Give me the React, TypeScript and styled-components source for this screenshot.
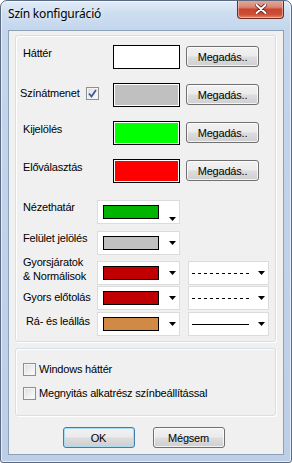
import React from "react";
import styled, { createGlobalStyle } from "styled-components";

const Global = createGlobalStyle`
  html, body { margin: 0; padding: 0; background: #ffffff; }
  body { width: 292px; height: 463px; overflow: hidden; }
  * { box-sizing: border-box; }
`;

const Window = styled.div`
  width: 292px;
  height: 463px;
  display: flex;
  flex-direction: column;
  border: 1px solid #5b6c82;
  border-radius: 7px 7px 3px 3px;
  background: linear-gradient(180deg, #e2ecf8 0px, #cddef1 12px, #c3d6ec 30px, #bccfe7 100%);
  box-shadow: inset 0 0 0 1px rgba(255, 255, 255, 0.6);
  padding: 0 7px 7px 7px;
  overflow: hidden;
`;

const TitleBar = styled.div`
  height: 29px;
  display: flex;
  align-items: flex-start;
  justify-content: space-between;
`;

const Title = styled.span`
  margin-top: 5px;
  font-family: "Noto Sans", "DejaVu Sans", sans-serif;
  font-size: 12px;
  line-height: 16px;
  letter-spacing: -0.2px;
  color: #000;
  text-shadow: 0 0 6px rgba(255, 255, 255, 0.9);
`;

const CloseButton = styled.div`
  margin-top: -1px;
  width: 47px;
  height: 19px;
  display: flex;
  align-items: center;
  justify-content: center;
  border: 1px solid #6d2b22;
  border-top: none;
  border-radius: 0 0 4px 4px;
  background: linear-gradient(180deg, #e9aa9a 0%, #d98672 40%, #c8462f 52%, #cc4e35 80%, #e28a6c 100%);
  box-shadow: inset 0 0 0 1px rgba(255, 220, 210, 0.5);
`;

const Client = styled.div`
  flex: 1;
  display: flex;
  flex-direction: column;
  background: #f0f0f0;
  border: 1px solid #8da1b8;
  font-family: "Liberation Sans", Arial, sans-serif;
  font-size: 11px;
  letter-spacing: -0.2px;
  color: #000;
`;

const Group = styled.div<{ $top: number; $height: number }>`
  margin: ${(p) => p.$top}px 7px 0 6px;
  height: ${(p) => p.$height}px;
  border: 1px solid #d5dfe5;
  border-radius: 3px;
  box-shadow: inset 1px 1px 0 #ffffff, 1px 1px 0 #ffffff;
  display: flex;
  flex-direction: column;
`;

const SwatchRow = styled.div<{ $top: number }>`
  margin-top: ${(p) => p.$top}px;
  height: 24px;
  display: flex;
  align-items: flex-start;
`;

const LabelCell = styled.div<{ $indent: number; $width: number; $offset: number }>`
  width: ${(p) => p.$width}px;
  padding-left: ${(p) => p.$indent}px;
  margin-top: ${(p) => p.$offset}px;
  display: flex;
  align-items: center;
  line-height: 14px;
  white-space: nowrap;
`;

const Swatch = styled.div<{ $color: string }>`
  width: 67px;
  height: 24px;
  background: ${(p) => p.$color};
  border: 1px solid #000;
  box-shadow: inset 0 0 0 1px #ffffff;
`;

const Button = styled.div<{ $width: number; $default?: boolean }>`
  width: ${(p) => p.$width}px;
  height: 21px;
  display: flex;
  align-items: center;
  justify-content: center;
  border: 1px solid ${(p) => (p.$default ? "#3c7fb1" : "#707070")};
  border-radius: 3px;
  background: linear-gradient(180deg, #f2f2f2 0%, #ebebeb 48%, #dddddd 52%, #cfcfcf 100%);
  box-shadow: inset 0 0 0 1px ${(p) => (p.$default ? "#a9dcf3" : "rgba(255,255,255,0.75)")};
  font-size: 11px;
  color: #000;
`;

const SideButton = styled(Button)`
  margin-left: 6px;
  margin-top: 1px;
`;

const CheckBox = styled.div<{ $gap: number }>`
  width: 13px;
  height: 13px;
  margin-left: ${(p) => p.$gap}px;
  border: 1px solid #8e8f8f;
  background: linear-gradient(135deg, #d9dcdf 0%, #f0f1f2 60%, #fdfdfd 100%);
  box-shadow: inset 0 0 0 1px #f4f4f4;
  display: flex;
  align-items: center;
  justify-content: center;
  flex-shrink: 0;
`;

const ComboRow = styled.div<{ $top: number }>`
  margin-top: ${(p) => p.$top}px;
  height: 24px;
  display: flex;
  align-items: flex-start;
`;

const Combo = styled.div<{ $width: number; $gap: number }>`
  width: ${(p) => p.$width}px;
  height: 24px;
  margin-left: ${(p) => p.$gap}px;
  background: #ffffff;
  border: 1px solid #dcdcdc;
  display: flex;
  align-items: center;
  padding-left: 5px;
  padding-right: 3px;
`;

const ComboSwatch = styled.div<{ $color: string }>`
  width: 56px;
  height: 14px;
  background: ${(p) => p.$color};
  border: 1px solid #000;
`;

const LineSample = styled.svg`
  margin-left: -2px;
  width: 57px;
  height: 3px;
`;

const Arrow = styled.svg<{ $low?: boolean }>`
  margin-left: auto;
  width: 7px;
  height: 4px;
  align-self: ${(p) => (p.$low ? "flex-end" : "center")};
  margin-bottom: ${(p) => (p.$low ? "2px" : "0")};
`;

const CheckRow = styled.div<{ $top: number }>`
  margin-top: ${(p) => p.$top}px;
  height: 13px;
  display: flex;
  align-items: center;
  padding-left: 7px;
`;

const CheckText = styled.span`
  margin-left: 3px;
  line-height: 13px;
  white-space: nowrap;
`;

const ButtonBar = styled.div`
  margin-top: 11px;
  display: flex;
  justify-content: center;
  gap: 18px;
  padding-right: 5px;
`;

const DropArrow = ({ low }: { low?: boolean }) => (
  <Arrow $low={low} viewBox="0 0 7 4">
    <polygon points="0,0 7,0 3.5,4" fill="#000" />
  </Arrow>
);

const ColorCombo = ({ color, low }: { color: string; low?: boolean }) => (
  <Combo $width={83} $gap={0}>
    <ComboSwatch $color={color} />
    <DropArrow low={low} />
  </Combo>
);

const LineCombo = ({ dashed }: { dashed: boolean }) => (
  <Combo $width={81} $gap={8}>
    <LineSample viewBox="0 0 57 3">
      <line
        x1="0"
        y1="1.5"
        x2="57"
        y2="1.5"
        stroke="#000"
        strokeWidth="1"
        strokeDasharray={dashed ? "3 3" : undefined}
      />
    </LineSample>
    <DropArrow />
  </Combo>
);

const swatchRows = [
  { label: "Háttér", color: "#ffffff", top: 9, indent: 7, check: false },
  { label: "Színátmenet", color: "#c0c0c0", top: 14, indent: 4, check: true },
  { label: "Kijelölés", color: "#00ff00", top: 14, indent: 7, check: false },
  { label: "Előválasztás", color: "#ff0000", top: 14, indent: 7, check: false },
];

const comboRows = [
  { label: ["Nézethatár"], color: "#00b400", top: 17, offset: 0, indent: 7, line: null as null | boolean, low: true },
  { label: ["Felület jelölés"], color: "#c0c0c0", top: 7, offset: 0, indent: 7, line: null as null | boolean, low: false },
  { label: ["Gyorsjáratok", "& Normálisok"], color: "#c00000", top: 6, offset: -6, indent: 7, line: true, low: false },
  { label: ["Gyors előtolás"], color: "#c00000", top: 1, offset: 4, indent: 7, line: true, low: false },
  { label: ["Rá- és leállás"], color: "#d08a46", top: 2, offset: 2, indent: 10, line: false, low: false },
];

export default function App() {
  return (
    <>
      <Global />
      <Window>
        <TitleBar>
          <Title>Szín konfiguráció</Title>
          <CloseButton>
            <svg width="12" height="10" viewBox="0 0 12 10">
              <path d="M1.5 1 L10.5 9 M10.5 1 L1.5 9" stroke="#5a1d14" strokeWidth="3.6" strokeLinecap="round" />
              <path d="M1.5 1 L10.5 9 M10.5 1 L1.5 9" stroke="#ffffff" strokeWidth="2" strokeLinecap="round" />
            </svg>
          </CloseButton>
        </TitleBar>
        <Client>
          <Group $top={4} $height={307}>
            {swatchRows.map((r) => (
              <SwatchRow key={r.label} $top={r.top}>
                <LabelCell $indent={r.indent} $width={97} $offset={r.check ? 3 : 1}>
                  {r.label}
                  {r.check && (
                    <CheckBox $gap={6}>
                      <svg width="9" height="9" viewBox="0 0 9 9">
                        <path d="M1 4.5 L3.5 7.5 L8 1" stroke="#3e5a9a" strokeWidth="1.8" fill="none" />
                      </svg>
                    </CheckBox>
                  )}
                </LabelCell>
                <Swatch $color={r.color} />
                <SideButton $width={73}>Megadás..</SideButton>
              </SwatchRow>
            ))}
            {comboRows.map((r) => (
              <ComboRow key={r.label[0]} $top={r.top}>
                <LabelCell $indent={r.indent} $width={81} $offset={r.offset}>
                  <span>
                    {r.label.map((l, i) => (
                      <React.Fragment key={l}>
                        {i > 0 && <br />}
                        {l}
                      </React.Fragment>
                    ))}
                  </span>
                </LabelCell>
                <ColorCombo color={r.color} low={r.low} />
                {r.line !== null && <LineCombo dashed={r.line} />}
              </ComboRow>
            ))}
          </Group>
          <Group $top={6} $height={68}>
            <CheckRow $top={14}>
              <CheckBox $gap={0} />
              <CheckText>Windows háttér</CheckText>
            </CheckRow>
            <CheckRow $top={11}>
              <CheckBox $gap={0} />
              <CheckText>Megnyitás alkatrész színbeállítással</CheckText>
            </CheckRow>
          </Group>
          <ButtonBar>
            <Button $width={72} $default>
              OK
            </Button>
            <Button $width={72}>Mégsem</Button>
          </ButtonBar>
        </Client>
      </Window>
    </>
  );
}
